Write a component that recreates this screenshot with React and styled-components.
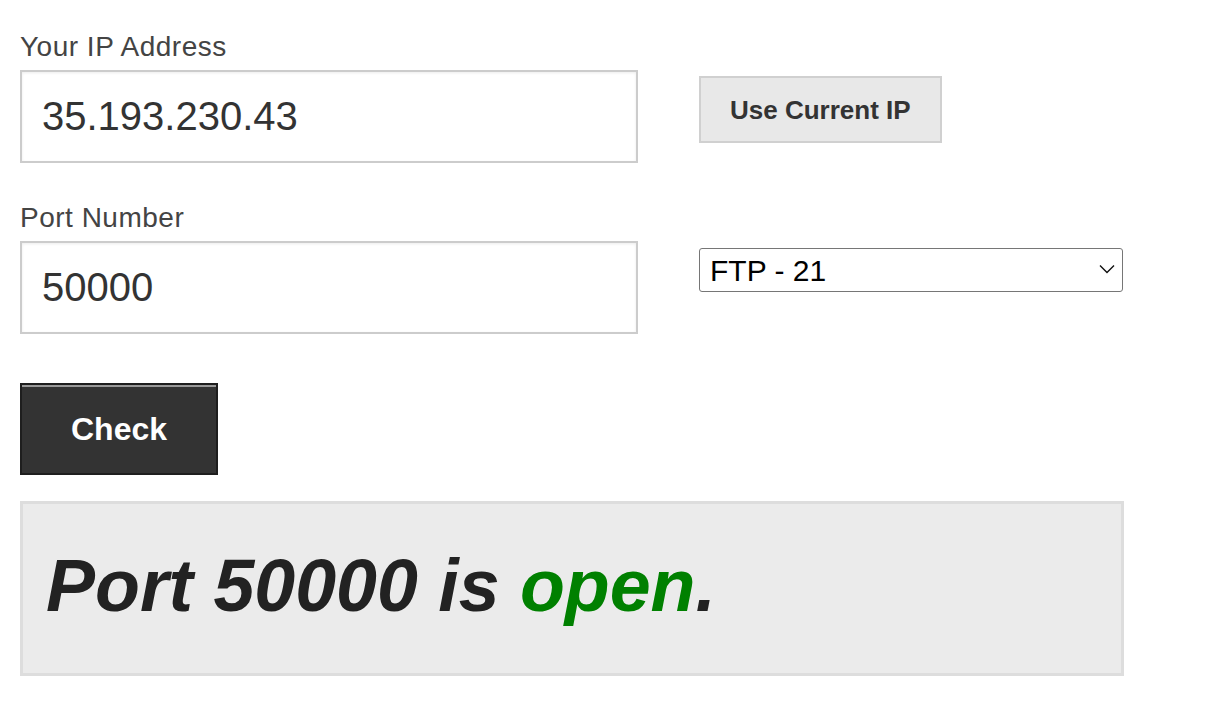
import styled, { createGlobalStyle } from "styled-components";
import { useState } from "react";

const GlobalStyle = createGlobalStyle`
  body {
    margin: 0;
    background: #fff;
    font-family: "Liberation Sans", Arial, Helvetica, sans-serif;
  }
`;

const Page = styled.div`
  padding: 31px 20px 20px 20px;
  width: 1104px;
`;

const FieldRow = styled.div`
  display: flex;
  gap: 61px;
  margin-bottom: ${(p) => p.gap || 0}px;
`;

const Field = styled.div`
  display: flex;
  flex-direction: column;
  width: 618px;
`;

const Label = styled.label`
  font-size: 28px;
  line-height: 32px;
  letter-spacing: 0.5px;
  color: #444;
  margin-bottom: 7px;
`;

const TextInput = styled.input`
  box-sizing: border-box;
  width: 618px;
  height: 93px;
  border: 2px solid #ccc;
  box-shadow: inset 0 1px 3px rgba(0, 0, 0, 0.08);
  padding: 0 20px;
  font-family: "Liberation Sans", Arial, sans-serif;
  font-size: 40px;
  color: #333;
  outline: none;
`;

const Side = styled.div`
  padding-top: ${(p) => p.top}px;
`;

const GreyButton = styled.button`
  box-sizing: border-box;
  height: 67px;
  padding: 2px 29px 0;
  background: #e8e8e8;
  border: 2px solid #d0d0d0;
  font-family: "Liberation Sans", Arial, sans-serif;
  font-weight: bold;
  font-size: 26px;
  color: #333;
`;

const SelectWrap = styled.div`
  position: relative;
  width: 424px;
`;

const Select = styled.select`
  appearance: none;
  box-sizing: border-box;
  width: 424px;
  height: 44px;
  border: 1px solid #767676;
  border-radius: 3px;
  background: #fff;
  padding: 0 10px;
  font-family: "Liberation Sans", Arial, sans-serif;
  font-size: 30px;
  color: #000;
  outline: none;
`;

const Chevron = styled.svg`
  position: absolute;
  right: 8px;
  top: 16px;
  pointer-events: none;
`;

const CheckButton = styled.button`
  box-sizing: border-box;
  width: 198px;
  height: 92px;
  margin-top: 49px;
  background: #333;
  border: 2px solid #1e1e1e;
  box-shadow: inset 0 2px 0 #999;
  color: #fff;
  font-family: "Liberation Sans", Arial, sans-serif;
  font-weight: bold;
  font-size: 32px;
`;

const Result = styled.div`
  box-sizing: border-box;
  height: 175px;
  margin-top: 26px;
  background: #ebebeb;
  border: 3px solid #ddd;
  display: flex;
  align-items: center;
  padding: 0 23px 6px;
`;

const Message = styled.p`
  margin: 0;
  font-weight: bold;
  font-style: italic;
  font-size: 73.5px;
  color: #222;
`;

const State = styled.span`
  color: ${(p) => (p.open ? "#008000" : "#c00")};
`;

const App = () => {
  const [ip, setIp] = useState("35.193.230.43");
  const [port, setPort] = useState("50000");

  return (
    <Page>
      <GlobalStyle />
      <FieldRow gap={39}>
        <Field>
          <Label>Your IP Address</Label>
          <TextInput value={ip} onChange={(e) => setIp(e.target.value)} />
        </Field>
        <Side top={45}>
          <GreyButton>Use Current IP</GreyButton>
        </Side>
      </FieldRow>
      <FieldRow>
        <Field>
          <Label>Port Number</Label>
          <TextInput value={port} onChange={(e) => setPort(e.target.value)} />
        </Field>
        <Side top={46}>
          <SelectWrap>
            <Select defaultValue="21">
              <option value="21">FTP - 21</option>
              <option value="22">SSH - 22</option>
              <option value="80">HTTP - 80</option>
              <option value="443">HTTPS - 443</option>
            </Select>
            <Chevron width="16" height="10" viewBox="0 0 16 10">
              <path d="M1 1.5 L8 8.5 L15 1.5" fill="none" stroke="#111" strokeWidth="1.4" />
            </Chevron>
          </SelectWrap>
        </Side>
      </FieldRow>
      <CheckButton>Check</CheckButton>
      <Result>
        <Message>
          Port {port} is <State open>open</State>.
        </Message>
      </Result>
    </Page>
  );
};

export default App;
